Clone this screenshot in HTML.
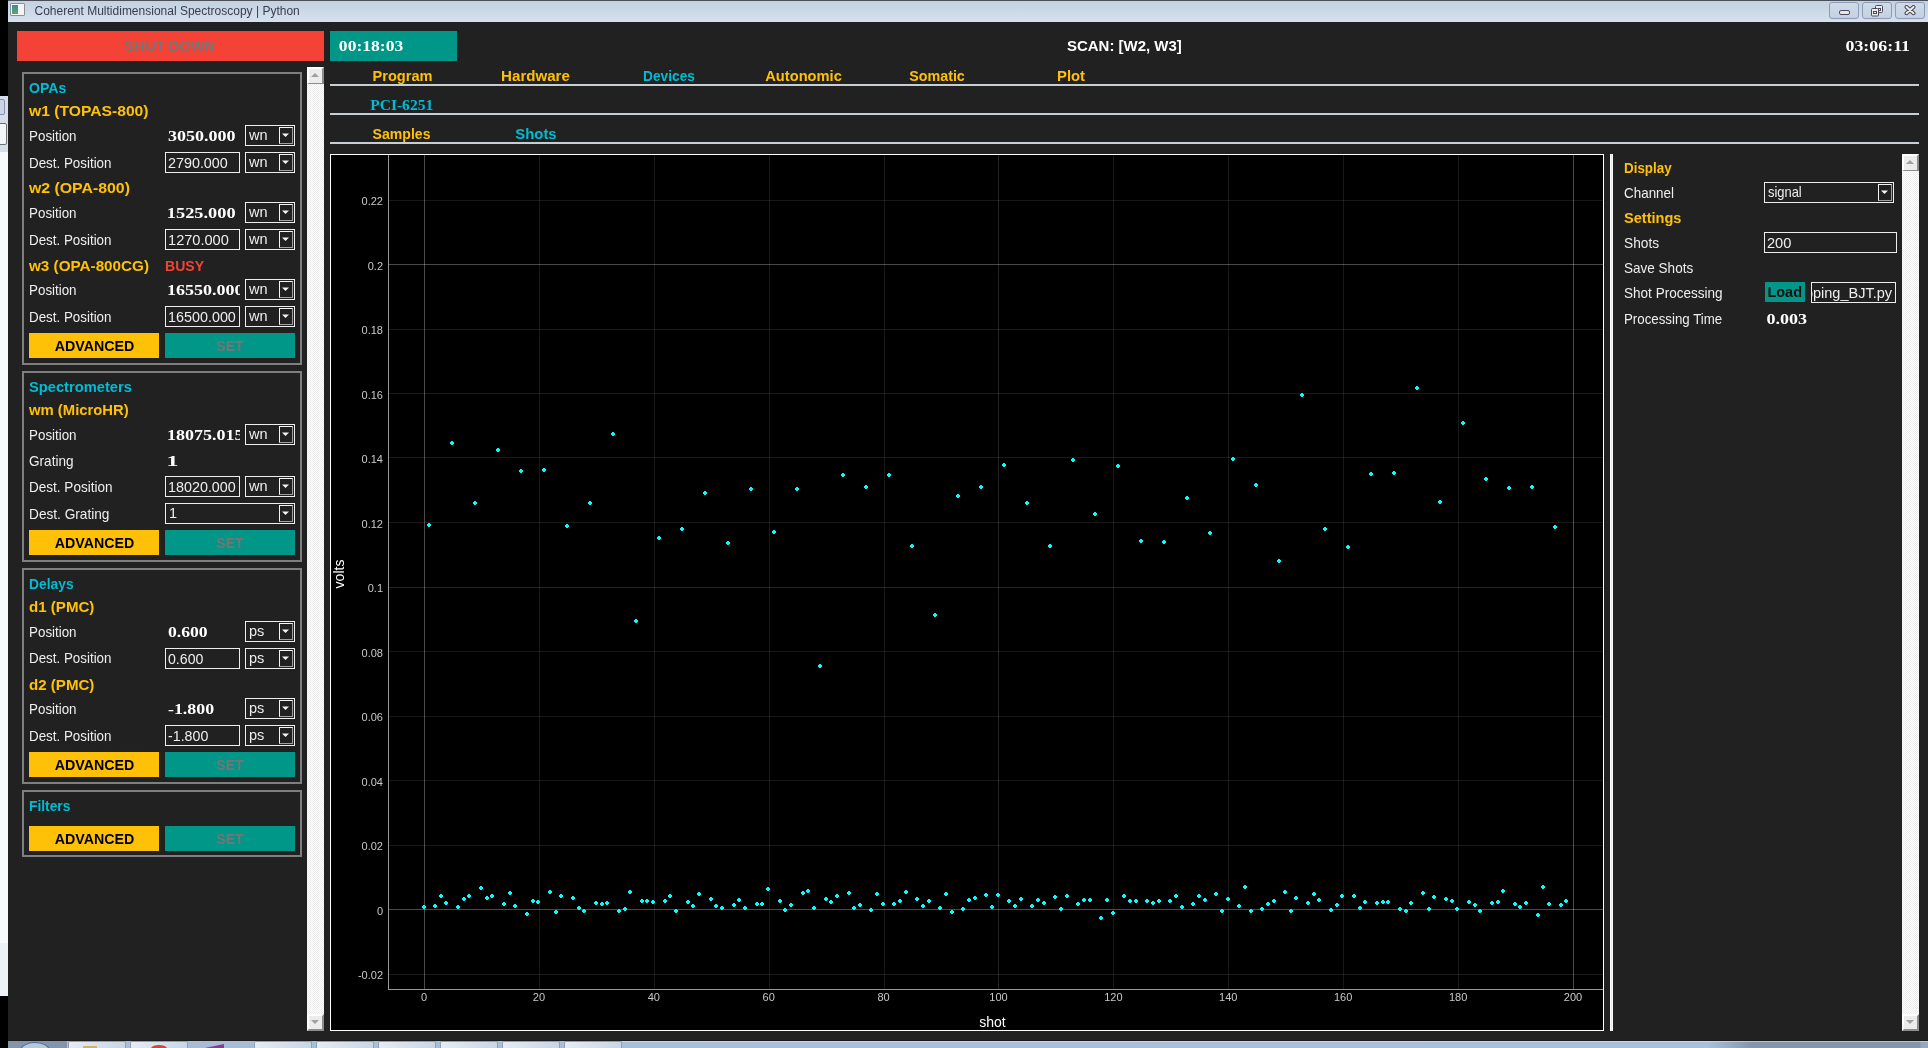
<!DOCTYPE html><html><head><meta charset="utf-8"><style>html,body{margin:0;padding:0;width:1928px;height:1048px;overflow:hidden;background:#212121;}#root{position:relative;width:1928px;height:1048px;overflow:hidden;background:#212121;}#root div{box-sizing:border-box;}</style></head><body><div id="root">
<div style="position:absolute;left:0px;top:0px;width:8px;height:1048px;background:#000"></div>
<div style="position:absolute;left:0px;top:96px;width:8px;height:56px;background:#d5dfeb"></div>
<div style="position:absolute;left:-4px;top:99px;width:9px;height:16px;border:1px solid #8890b0;border-radius:2px;background:#c9d5e3"></div>
<div style="position:absolute;left:-4px;top:123px;width:11px;height:22px;border:1px solid #707070;border-radius:2px;background:#f4f6f9"></div>
<div style="position:absolute;left:0px;top:152px;width:8px;height:791px;background:#f9fafb"></div>
<div style="position:absolute;left:0px;top:943px;width:8px;height:53px;background:#edf1f8"></div>
<div style="position:absolute;left:8px;top:0px;width:1920px;height:1px;background:#4a4f58"></div>
<div style="position:absolute;left:8px;top:1px;width:1920px;height:21px;background:linear-gradient(#c3d1e0,#d5e1ee)"></div>
<div style="position:absolute;left:10px;top:3px;width:15px;height:13px;background:#f4f4f4;border:1px solid #8a8f98;border-radius:1px"></div>
<div style="position:absolute;left:12px;top:5px;width:6px;height:9px;background:linear-gradient(#3c8aa0,#58a868)"></div>
<div style="position:absolute;left:34.5px;top:4.64px;font:normal 12px/12px 'Liberation Sans', sans-serif;color:#3a3d4e;white-space:pre;">Coherent Multidimensional Spectroscopy | Python</div>
<div style="position:absolute;left:1829px;top:2px;width:30px;height:17px;border:1px solid #8e9bb8;border-radius:3px;background:linear-gradient(#d0dbe8,#c4d1e2)"></div>
<div style="position:absolute;left:1862px;top:2px;width:30px;height:17px;border:1px solid #8e9bb8;border-radius:3px;background:linear-gradient(#d0dbe8,#c4d1e2)"></div>
<div style="position:absolute;left:1895px;top:2px;width:30px;height:17px;border:1px solid #8e9bb8;border-radius:3px;background:linear-gradient(#d0dbe8,#c4d1e2)"></div>
<div style="position:absolute;left:1839px;top:10px;width:11px;height:5px;background:#e8e8e8;border:1px solid #4a4a58;border-radius:2px"></div>
<svg style="position:absolute;left:1870px;top:4px" width="14" height="13"><rect x="5.5" y="1.5" width="7" height="7" rx="1" fill="#ececec" stroke="#4a4a58"/><rect x="8.5" y="4.5" width="2" height="2" fill="none" stroke="#4a4a58"/><rect x="1.5" y="4.5" width="7" height="7.5" rx="1" fill="#ececec" stroke="#4a4a58"/><rect x="3.5" y="7.5" width="3" height="2" fill="none" stroke="#4a4a58"/></svg>
<svg style="position:absolute;left:1903px;top:5px" width="14" height="11"><path d="M3.5 2 L10.5 8.2 M10.5 2 L3.5 8.2" stroke="#4a4a58" stroke-width="4" stroke-linecap="round"/><path d="M3.5 2 L10.5 8.2 M10.5 2 L3.5 8.2" stroke="#ececec" stroke-width="2" stroke-linecap="round"/></svg>
<div style="position:absolute;left:17px;top:31px;width:307px;height:30px;background:#f44336"></div>
<div id="t0" style="position:absolute;left:-29.5px;width:400px;text-align:center;top:39.15px;font:bold 14px/14px 'Liberation Sans', sans-serif;color:#757575;white-space:pre;transform:translateX(-10.478px) scaleX(1.0474);transform-origin:0 0;">SHUT DOWN</div>
<div style="position:absolute;left:330px;top:31px;width:127px;height:30px;background:#009688"></div>
<div id="t1" style="position:absolute;left:339.5px;top:39.98px;font:bold 14px/14px 'Liberation Serif', serif;color:#ffffff;white-space:pre;transform:translateX(-1.147px) scaleX(1.2553);transform-origin:0 0;">00:18:03</div>
<div id="t2" style="position:absolute;left:1067px;top:39.17px;font:bold 14.8px/14.8px 'Liberation Sans', sans-serif;color:#ffffff;white-space:pre;transform:translateX(0.000px) scaleX(1.0122);transform-origin:0 0;">SCAN: [W2, W3]</div>
<div id="t3" style="position:absolute;left:1509px;width:400px;text-align:right;top:39.98px;font:bold 14px/14px 'Liberation Serif', serif;color:#ffffff;white-space:pre;transform:translateX(-109.449px) scaleX(1.2762);transform-origin:0 0;">03:06:11</div>
<div id="t4" style="position:absolute;left:302.0px;width:200px;text-align:center;top:68.87px;font:bold 14.8px/14.8px 'Liberation Sans', sans-serif;color:#ffc107;white-space:pre;transform:translateX(1.858px) scaleX(0.9864);transform-origin:0 0;">Program</div>
<div id="t5" style="position:absolute;left:436.0px;width:200px;text-align:center;top:68.87px;font:bold 14.8px/14.8px 'Liberation Sans', sans-serif;color:#ffc107;white-space:pre;transform:translateX(-2.450px) scaleX(1.0194);transform-origin:0 0;">Hardware</div>
<div id="t6" style="position:absolute;left:569.5px;width:200px;text-align:center;top:68.87px;font:bold 14.8px/14.8px 'Liberation Sans', sans-serif;color:#00bcd4;white-space:pre;transform:translateX(6.292px) scaleX(0.9270);transform-origin:0 0;">Devices</div>
<div id="t7" style="position:absolute;left:703.0px;width:200px;text-align:center;top:68.87px;font:bold 14.8px/14.8px 'Liberation Sans', sans-serif;color:#ffc107;white-space:pre;transform:translateX(1.561px) scaleX(0.9898);transform-origin:0 0;">Autonomic</div>
<div id="t8" style="position:absolute;left:837.0px;width:200px;text-align:center;top:68.87px;font:bold 14.8px/14.8px 'Liberation Sans', sans-serif;color:#ffc107;white-space:pre;transform:translateX(3.288px) scaleX(0.9671);transform-origin:0 0;">Somatic</div>
<div id="t9" style="position:absolute;left:971.5px;width:200px;text-align:center;top:68.87px;font:bold 14.8px/14.8px 'Liberation Sans', sans-serif;color:#ffc107;white-space:pre;transform:translateX(-1.120px) scaleX(1.0014);transform-origin:0 0;">Plot</div>
<div style="position:absolute;left:330px;top:84px;width:1589px;height:2px;background:#c8ced4"></div>
<div id="t10" style="position:absolute;left:302.0px;width:200px;text-align:center;top:98.47px;font:bold 14.6px/14.6px 'Liberation Serif', serif;color:#00bcd4;white-space:pre;transform:translateX(-6.795px) scaleX(1.0648);transform-origin:0 0;">PCI-6251</div>
<div style="position:absolute;left:330px;top:113px;width:1589px;height:2px;background:#c8ced4"></div>
<div id="t11" style="position:absolute;left:301.5px;width:200px;text-align:center;top:126.87px;font:bold 14.8px/14.8px 'Liberation Sans', sans-serif;color:#ffc107;white-space:pre;transform:translateX(4.505px) scaleX(0.9503);transform-origin:0 0;">Samples</div>
<div id="t12" style="position:absolute;left:436.0px;width:200px;text-align:center;top:126.87px;font:bold 14.8px/14.8px 'Liberation Sans', sans-serif;color:#00bcd4;white-space:pre;transform:translateX(-0.466px) scaleX(1.0043);transform-origin:0 0;">Shots</div>
<div style="position:absolute;left:330px;top:142px;width:1589px;height:2px;background:#c8ced4"></div>
<div style="position:absolute;left:307px;top:67px;width:17px;height:964px;background-color:#f6f6f6;background-image:repeating-conic-gradient(#ffffff 0 25%,#ececec 0 50%);background-size:2px 2px"></div>
<div style="position:absolute;left:307px;top:67px;width:17px;height:17px;background:#ececec;border-top:2px solid #fff;border-left:2px solid #fff;border-right:2px solid #8c8c8c;border-bottom:1px solid #8c8c8c"></div>
<svg style="position:absolute;left:307px;top:67px" width="17" height="17"><path d="M4.0 10 L12.0 10 L8.0 6 Z" fill="#a0a0a0"/></svg>
<div style="position:absolute;left:307px;top:1014px;width:17px;height:17px;background:#ececec;border-top:2px solid #fff;border-left:2px solid #fff;border-right:2px solid #8c8c8c;border-bottom:2px solid #8c8c8c"></div>
<svg style="position:absolute;left:307px;top:1014px" width="17" height="17"><path d="M4.0 6 L12.0 6 L8.0 10 Z" fill="#a0a0a0"/></svg>
<div style="position:absolute;left:1902px;top:154px;width:17px;height:877px;background-color:#f6f6f6;background-image:repeating-conic-gradient(#ffffff 0 25%,#ececec 0 50%);background-size:2px 2px"></div>
<div style="position:absolute;left:1902px;top:154px;width:17px;height:17px;background:#ececec;border-top:2px solid #fff;border-left:2px solid #fff;border-right:2px solid #8c8c8c;border-bottom:1px solid #8c8c8c"></div>
<svg style="position:absolute;left:1902px;top:154px" width="17" height="17"><path d="M4.0 10 L12.0 10 L8.0 6 Z" fill="#a0a0a0"/></svg>
<div style="position:absolute;left:1902px;top:1014px;width:17px;height:17px;background:#ececec;border-top:2px solid #fff;border-left:2px solid #fff;border-right:2px solid #8c8c8c;border-bottom:2px solid #8c8c8c"></div>
<svg style="position:absolute;left:1902px;top:1014px" width="17" height="17"><path d="M4.0 6 L12.0 6 L8.0 10 Z" fill="#a0a0a0"/></svg>
<div style="position:absolute;left:22px;top:72px;width:280px;height:293px;border:2px solid #7f7f7f"></div>
<div id="t13" style="position:absolute;left:29px;top:81.47px;font:bold 14.8px/14.8px 'Liberation Sans', sans-serif;color:#00bcd4;white-space:pre;transform:translateX(0.010px) scaleX(0.9488);transform-origin:0 0;">OPAs</div>
<div id="t14" style="position:absolute;left:29px;top:104.47px;font:bold 14.8px/14.8px 'Liberation Sans', sans-serif;color:#ffc107;white-space:pre;transform:translateX(-0.026px) scaleX(1.0589);transform-origin:0 0;">w1 (TOPAS-800)</div>
<div id="t15" style="position:absolute;left:29px;top:128.73px;font:normal 14.5px/14.5px 'Liberation Sans', sans-serif;color:#eeeeee;white-space:pre;transform:translateX(0.050px) scaleX(0.9205);transform-origin:0 0;">Position</div>
<div id="t16" style="position:absolute;left:168px;top:128.22px;font:bold 15.5px/15.5px 'Liberation Serif', serif;color:#ffffff;white-space:pre;transform:translateX(-0.023px) scaleX(1.1622);transform-origin:0 0;">3050.000</div>
<div style="position:absolute;left:245px;top:125px;width:50px;height:21px;border:1px solid #eeeeee;background:#212121"></div>
<div style="position:absolute;left:279px;top:127px;width:14px;height:17px;border-top:1px solid #f4f4f4;border-left:1px solid #f4f4f4;border-right:1px solid #a0a0a0;border-bottom:1px solid #a0a0a0;background:#212121"></div>
<svg style="position:absolute;left:279px;top:125px" width="14" height="21"><path d="M3 8.5 L10 8.5 L6.5 12.0 Z" fill="#f4f4f4"/></svg>
<div style="position:absolute;left:249px;top:127.73px;font:normal 14.5px/14.5px 'Liberation Sans', sans-serif;color:#eeeeee;white-space:pre;">wn</div>
<div id="t17" style="position:absolute;left:29px;top:155.73px;font:normal 14.5px/14.5px 'Liberation Sans', sans-serif;color:#eeeeee;white-space:pre;transform:translateX(0.038px) scaleX(0.9216);transform-origin:0 0;">Dest. Position</div>
<div style="position:absolute;left:165px;top:152px;width:75px;height:21px;border:1px solid #eeeeee;background:#212121"></div>
<div id="t18" style="position:absolute;left:168px;top:156.03px;font:normal 14.5px/14.5px 'Liberation Sans', sans-serif;color:#eeeeee;white-space:pre;transform:translateX(-0.025px) scaleX(0.9893);transform-origin:0 0;">2790.000</div>
<div style="position:absolute;left:245px;top:152px;width:50px;height:21px;border:1px solid #eeeeee;background:#212121"></div>
<div style="position:absolute;left:279px;top:154px;width:14px;height:17px;border-top:1px solid #f4f4f4;border-left:1px solid #f4f4f4;border-right:1px solid #a0a0a0;border-bottom:1px solid #a0a0a0;background:#212121"></div>
<svg style="position:absolute;left:279px;top:152px" width="14" height="21"><path d="M3 8.5 L10 8.5 L6.5 12.0 Z" fill="#f4f4f4"/></svg>
<div style="position:absolute;left:249px;top:154.73px;font:normal 14.5px/14.5px 'Liberation Sans', sans-serif;color:#eeeeee;white-space:pre;">wn</div>
<div id="t19" style="position:absolute;left:29px;top:181.47px;font:bold 14.8px/14.8px 'Liberation Sans', sans-serif;color:#ffc107;white-space:pre;transform:translateX(-0.033px) scaleX(1.0709);transform-origin:0 0;">w2 (OPA-800)</div>
<div id="t20" style="position:absolute;left:29px;top:205.73px;font:normal 14.5px/14.5px 'Liberation Sans', sans-serif;color:#eeeeee;white-space:pre;transform:translateX(0.050px) scaleX(0.9205);transform-origin:0 0;">Position</div>
<div id="t21" style="position:absolute;left:168px;top:205.22px;font:bold 15.5px/15.5px 'Liberation Serif', serif;color:#ffffff;white-space:pre;transform:translateX(-1.213px) scaleX(1.1832);transform-origin:0 0;">1525.000</div>
<div style="position:absolute;left:245px;top:202px;width:50px;height:21px;border:1px solid #eeeeee;background:#212121"></div>
<div style="position:absolute;left:279px;top:204px;width:14px;height:17px;border-top:1px solid #f4f4f4;border-left:1px solid #f4f4f4;border-right:1px solid #a0a0a0;border-bottom:1px solid #a0a0a0;background:#212121"></div>
<svg style="position:absolute;left:279px;top:202px" width="14" height="21"><path d="M3 8.5 L10 8.5 L6.5 12.0 Z" fill="#f4f4f4"/></svg>
<div style="position:absolute;left:249px;top:204.73px;font:normal 14.5px/14.5px 'Liberation Sans', sans-serif;color:#eeeeee;white-space:pre;">wn</div>
<div id="t22" style="position:absolute;left:29px;top:232.73px;font:normal 14.5px/14.5px 'Liberation Sans', sans-serif;color:#eeeeee;white-space:pre;transform:translateX(0.038px) scaleX(0.9216);transform-origin:0 0;">Dest. Position</div>
<div style="position:absolute;left:165px;top:229px;width:75px;height:21px;border:1px solid #eeeeee;background:#212121"></div>
<div id="t23" style="position:absolute;left:168px;top:233.03px;font:normal 14.5px/14.5px 'Liberation Sans', sans-serif;color:#eeeeee;white-space:pre;transform:translateX(0.033px) scaleX(1.0049);transform-origin:0 0;">1270.000</div>
<div style="position:absolute;left:245px;top:229px;width:50px;height:21px;border:1px solid #eeeeee;background:#212121"></div>
<div style="position:absolute;left:279px;top:231px;width:14px;height:17px;border-top:1px solid #f4f4f4;border-left:1px solid #f4f4f4;border-right:1px solid #a0a0a0;border-bottom:1px solid #a0a0a0;background:#212121"></div>
<svg style="position:absolute;left:279px;top:229px" width="14" height="21"><path d="M3 8.5 L10 8.5 L6.5 12.0 Z" fill="#f4f4f4"/></svg>
<div style="position:absolute;left:249px;top:231.73px;font:normal 14.5px/14.5px 'Liberation Sans', sans-serif;color:#eeeeee;white-space:pre;">wn</div>
<div id="t24" style="position:absolute;left:29px;top:259.17px;font:bold 14.8px/14.8px 'Liberation Sans', sans-serif;color:#ffc107;white-space:pre;transform:translateX(-0.029px) scaleX(1.0308);transform-origin:0 0;">w3 (OPA-800CG)</div>
<div id="t25" style="position:absolute;left:165.7px;top:259.17px;font:bold 14.8px/14.8px 'Liberation Sans', sans-serif;color:#f44336;white-space:pre;transform:translateX(-0.955px) scaleX(0.9501);transform-origin:0 0;">BUSY</div>
<div id="t26" style="position:absolute;left:29px;top:282.73px;font:normal 14.5px/14.5px 'Liberation Sans', sans-serif;color:#eeeeee;white-space:pre;transform:translateX(0.050px) scaleX(0.9205);transform-origin:0 0;">Position</div>
<div style="position:absolute;left:160px;top:0;width:80px;height:1048px;overflow:hidden"><div style="position:absolute;left:7.0px;top:282.22px;font:bold 15.5px/15.5px 'Liberation Serif', serif;color:#ffffff;white-space:pre;transform:scaleX(1.1622);transform-origin:0 0;">16550.000</div></div>
<div style="position:absolute;left:245px;top:279px;width:50px;height:21px;border:1px solid #eeeeee;background:#212121"></div>
<div style="position:absolute;left:279px;top:281px;width:14px;height:17px;border-top:1px solid #f4f4f4;border-left:1px solid #f4f4f4;border-right:1px solid #a0a0a0;border-bottom:1px solid #a0a0a0;background:#212121"></div>
<svg style="position:absolute;left:279px;top:279px" width="14" height="21"><path d="M3 8.5 L10 8.5 L6.5 12.0 Z" fill="#f4f4f4"/></svg>
<div style="position:absolute;left:249px;top:281.73px;font:normal 14.5px/14.5px 'Liberation Sans', sans-serif;color:#eeeeee;white-space:pre;">wn</div>
<div id="t27" style="position:absolute;left:29px;top:309.73px;font:normal 14.5px/14.5px 'Liberation Sans', sans-serif;color:#eeeeee;white-space:pre;transform:translateX(0.038px) scaleX(0.9216);transform-origin:0 0;">Dest. Position</div>
<div style="position:absolute;left:165px;top:306px;width:75px;height:21px;border:1px solid #eeeeee;background:#212121"></div>
<div id="t28" style="position:absolute;left:168px;top:310.03px;font:normal 14.5px/14.5px 'Liberation Sans', sans-serif;color:#eeeeee;white-space:pre;transform:translateX(0.040px) scaleX(0.9891);transform-origin:0 0;">16500.000</div>
<div style="position:absolute;left:245px;top:306px;width:50px;height:21px;border:1px solid #eeeeee;background:#212121"></div>
<div style="position:absolute;left:279px;top:308px;width:14px;height:17px;border-top:1px solid #f4f4f4;border-left:1px solid #f4f4f4;border-right:1px solid #a0a0a0;border-bottom:1px solid #a0a0a0;background:#212121"></div>
<svg style="position:absolute;left:279px;top:306px" width="14" height="21"><path d="M3 8.5 L10 8.5 L6.5 12.0 Z" fill="#f4f4f4"/></svg>
<div style="position:absolute;left:249px;top:308.73px;font:normal 14.5px/14.5px 'Liberation Sans', sans-serif;color:#eeeeee;white-space:pre;">wn</div>
<div style="position:absolute;left:29px;top:333px;width:130px;height:25px;background:#ffc107"></div>
<div id="t29" style="position:absolute;left:29.0px;width:130px;text-align:center;top:339.45px;font:bold 14px/14px 'Liberation Sans', sans-serif;color:#000000;white-space:pre;transform:translateX(-0.521px) scaleX(1.0156);transform-origin:0 0;">ADVANCED</div>
<div style="position:absolute;left:165px;top:333px;width:130px;height:25px;background:#009688"></div>
<div id="t30" style="position:absolute;left:165.0px;width:130px;text-align:center;top:339.45px;font:bold 14px/14px 'Liberation Sans', sans-serif;color:#757575;white-space:pre;transform:translateX(-0.231px) scaleX(1.0032);transform-origin:0 0;">SET</div>
<div style="position:absolute;left:22px;top:371px;width:280px;height:191px;border:2px solid #7f7f7f"></div>
<div id="t31" style="position:absolute;left:29px;top:380.47px;font:bold 14.8px/14.8px 'Liberation Sans', sans-serif;color:#00bcd4;white-space:pre;transform:translateX(0.024px) scaleX(0.9923);transform-origin:0 0;">Spectrometers</div>
<div id="t32" style="position:absolute;left:29px;top:403.17px;font:bold 14.8px/14.8px 'Liberation Sans', sans-serif;color:#ffc107;white-space:pre;transform:translateX(-0.025px) scaleX(1.0031);transform-origin:0 0;">wm (MicroHR)</div>
<div id="t33" style="position:absolute;left:29px;top:427.73px;font:normal 14.5px/14.5px 'Liberation Sans', sans-serif;color:#eeeeee;white-space:pre;transform:translateX(0.050px) scaleX(0.9205);transform-origin:0 0;">Position</div>
<div style="position:absolute;left:160px;top:0;width:80px;height:1048px;overflow:hidden"><div style="position:absolute;left:7.0px;top:427.22px;font:bold 15.5px/15.5px 'Liberation Serif', serif;color:#ffffff;white-space:pre;transform:scaleX(1.1622);transform-origin:0 0;">18075.015</div></div>
<div style="position:absolute;left:245px;top:424px;width:50px;height:21px;border:1px solid #eeeeee;background:#212121"></div>
<div style="position:absolute;left:279px;top:426px;width:14px;height:17px;border-top:1px solid #f4f4f4;border-left:1px solid #f4f4f4;border-right:1px solid #a0a0a0;border-bottom:1px solid #a0a0a0;background:#212121"></div>
<svg style="position:absolute;left:279px;top:424px" width="14" height="21"><path d="M3 8.5 L10 8.5 L6.5 12.0 Z" fill="#f4f4f4"/></svg>
<div style="position:absolute;left:249px;top:426.73px;font:normal 14.5px/14.5px 'Liberation Sans', sans-serif;color:#eeeeee;white-space:pre;">wn</div>
<div id="t34" style="position:absolute;left:29px;top:453.73px;font:normal 14.5px/14.5px 'Liberation Sans', sans-serif;color:#eeeeee;white-space:pre;transform:translateX(0.008px) scaleX(0.9358);transform-origin:0 0;">Grating</div>
<div id="t35" style="position:absolute;left:168px;top:453.22px;font:bold 15.5px/15.5px 'Liberation Serif', serif;color:#ffffff;white-space:pre;transform:translateX(-1.618px) scaleX(1.5377);transform-origin:0 0;">1</div>
<div id="t36" style="position:absolute;left:29px;top:479.73px;font:normal 14.5px/14.5px 'Liberation Sans', sans-serif;color:#eeeeee;white-space:pre;transform:translateX(0.034px) scaleX(0.9327);transform-origin:0 0;">Dest. Position</div>
<div style="position:absolute;left:165px;top:476px;width:75px;height:21px;border:1px solid #eeeeee;background:#212121"></div>
<div id="t37" style="position:absolute;left:168px;top:480.03px;font:normal 14.5px/14.5px 'Liberation Sans', sans-serif;color:#eeeeee;white-space:pre;transform:translateX(0.047px) scaleX(0.9882);transform-origin:0 0;">18020.000</div>
<div style="position:absolute;left:245px;top:476px;width:50px;height:21px;border:1px solid #eeeeee;background:#212121"></div>
<div style="position:absolute;left:279px;top:478px;width:14px;height:17px;border-top:1px solid #f4f4f4;border-left:1px solid #f4f4f4;border-right:1px solid #a0a0a0;border-bottom:1px solid #a0a0a0;background:#212121"></div>
<svg style="position:absolute;left:279px;top:476px" width="14" height="21"><path d="M3 8.5 L10 8.5 L6.5 12.0 Z" fill="#f4f4f4"/></svg>
<div style="position:absolute;left:249px;top:478.73px;font:normal 14.5px/14.5px 'Liberation Sans', sans-serif;color:#eeeeee;white-space:pre;">wn</div>
<div id="t38" style="position:absolute;left:29px;top:506.73px;font:normal 14.5px/14.5px 'Liberation Sans', sans-serif;color:#eeeeee;white-space:pre;transform:translateX(0.023px) scaleX(0.9417);transform-origin:0 0;">Dest. Grating</div>
<div style="position:absolute;left:165px;top:503px;width:130px;height:21px;border:1px solid #eeeeee;background:#212121"></div>
<div style="position:absolute;left:279px;top:505px;width:14px;height:17px;border-top:1px solid #f4f4f4;border-left:1px solid #f4f4f4;border-right:1px solid #a0a0a0;border-bottom:1px solid #a0a0a0;background:#212121"></div>
<svg style="position:absolute;left:279px;top:503px" width="14" height="21"><path d="M3 8.5 L10 8.5 L6.5 12.0 Z" fill="#f4f4f4"/></svg>
<div style="position:absolute;left:169px;top:505.73px;font:normal 14.5px/14.5px 'Liberation Sans', sans-serif;color:#eeeeee;white-space:pre;">1</div>
<div style="position:absolute;left:29px;top:530px;width:130px;height:25px;background:#ffc107"></div>
<div id="t39" style="position:absolute;left:29.0px;width:130px;text-align:center;top:536.45px;font:bold 14px/14px 'Liberation Sans', sans-serif;color:#000000;white-space:pre;transform:translateX(-0.521px) scaleX(1.0156);transform-origin:0 0;">ADVANCED</div>
<div style="position:absolute;left:165px;top:530px;width:130px;height:25px;background:#009688"></div>
<div id="t40" style="position:absolute;left:165.0px;width:130px;text-align:center;top:536.45px;font:bold 14px/14px 'Liberation Sans', sans-serif;color:#757575;white-space:pre;transform:translateX(-0.231px) scaleX(1.0032);transform-origin:0 0;">SET</div>
<div style="position:absolute;left:22px;top:568px;width:280px;height:216px;border:2px solid #7f7f7f"></div>
<div id="t41" style="position:absolute;left:29px;top:577.17px;font:bold 14.8px/14.8px 'Liberation Sans', sans-serif;color:#00bcd4;white-space:pre;transform:translateX(0.008px) scaleX(0.9357);transform-origin:0 0;">Delays</div>
<div id="t42" style="position:absolute;left:29px;top:600.27px;font:bold 14.8px/14.8px 'Liberation Sans', sans-serif;color:#ffc107;white-space:pre;transform:translateX(0.014px) scaleX(1.0198);transform-origin:0 0;">d1 (PMC)</div>
<div id="t43" style="position:absolute;left:29px;top:624.73px;font:normal 14.5px/14.5px 'Liberation Sans', sans-serif;color:#eeeeee;white-space:pre;transform:translateX(0.050px) scaleX(0.9205);transform-origin:0 0;">Position</div>
<div id="t44" style="position:absolute;left:168px;top:624.22px;font:bold 15.5px/15.5px 'Liberation Serif', serif;color:#ffffff;white-space:pre;transform:translateX(-0.027px) scaleX(1.1379);transform-origin:0 0;">0.600</div>
<div style="position:absolute;left:245px;top:621px;width:50px;height:21px;border:1px solid #eeeeee;background:#212121"></div>
<div style="position:absolute;left:279px;top:623px;width:14px;height:17px;border-top:1px solid #f4f4f4;border-left:1px solid #f4f4f4;border-right:1px solid #a0a0a0;border-bottom:1px solid #a0a0a0;background:#212121"></div>
<svg style="position:absolute;left:279px;top:621px" width="14" height="21"><path d="M3 8.5 L10 8.5 L6.5 12.0 Z" fill="#f4f4f4"/></svg>
<div style="position:absolute;left:249px;top:623.73px;font:normal 14.5px/14.5px 'Liberation Sans', sans-serif;color:#eeeeee;white-space:pre;">ps</div>
<div id="t45" style="position:absolute;left:29px;top:651.23px;font:normal 14.5px/14.5px 'Liberation Sans', sans-serif;color:#eeeeee;white-space:pre;transform:translateX(0.038px) scaleX(0.9216);transform-origin:0 0;">Dest. Position</div>
<div style="position:absolute;left:165px;top:648px;width:75px;height:21px;border:1px solid #eeeeee;background:#212121"></div>
<div id="t46" style="position:absolute;left:168px;top:652.03px;font:normal 14.5px/14.5px 'Liberation Sans', sans-serif;color:#eeeeee;white-space:pre;transform:translateX(-0.014px) scaleX(0.9755);transform-origin:0 0;">0.600</div>
<div style="position:absolute;left:245px;top:648px;width:50px;height:21px;border:1px solid #eeeeee;background:#212121"></div>
<div style="position:absolute;left:279px;top:650px;width:14px;height:17px;border-top:1px solid #f4f4f4;border-left:1px solid #f4f4f4;border-right:1px solid #a0a0a0;border-bottom:1px solid #a0a0a0;background:#212121"></div>
<svg style="position:absolute;left:279px;top:648px" width="14" height="21"><path d="M3 8.5 L10 8.5 L6.5 12.0 Z" fill="#f4f4f4"/></svg>
<div style="position:absolute;left:249px;top:650.73px;font:normal 14.5px/14.5px 'Liberation Sans', sans-serif;color:#eeeeee;white-space:pre;">ps</div>
<div id="t47" style="position:absolute;left:29px;top:677.67px;font:bold 14.8px/14.8px 'Liberation Sans', sans-serif;color:#ffc107;white-space:pre;transform:translateX(0.014px) scaleX(1.0198);transform-origin:0 0;">d2 (PMC)</div>
<div id="t48" style="position:absolute;left:29px;top:701.73px;font:normal 14.5px/14.5px 'Liberation Sans', sans-serif;color:#eeeeee;white-space:pre;transform:translateX(0.050px) scaleX(0.9205);transform-origin:0 0;">Position</div>
<div id="t49" style="position:absolute;left:168px;top:701.22px;font:bold 15.5px/15.5px 'Liberation Serif', serif;color:#ffffff;white-space:pre;transform:translateX(-0.032px) scaleX(1.1531);transform-origin:0 0;">-1.800</div>
<div style="position:absolute;left:245px;top:698px;width:50px;height:21px;border:1px solid #eeeeee;background:#212121"></div>
<div style="position:absolute;left:279px;top:700px;width:14px;height:17px;border-top:1px solid #f4f4f4;border-left:1px solid #f4f4f4;border-right:1px solid #a0a0a0;border-bottom:1px solid #a0a0a0;background:#212121"></div>
<svg style="position:absolute;left:279px;top:698px" width="14" height="21"><path d="M3 8.5 L10 8.5 L6.5 12.0 Z" fill="#f4f4f4"/></svg>
<div style="position:absolute;left:249px;top:700.73px;font:normal 14.5px/14.5px 'Liberation Sans', sans-serif;color:#eeeeee;white-space:pre;">ps</div>
<div id="t50" style="position:absolute;left:29px;top:728.73px;font:normal 14.5px/14.5px 'Liberation Sans', sans-serif;color:#eeeeee;white-space:pre;transform:translateX(0.038px) scaleX(0.9216);transform-origin:0 0;">Dest. Position</div>
<div style="position:absolute;left:165px;top:725px;width:75px;height:21px;border:1px solid #eeeeee;background:#212121"></div>
<div id="t51" style="position:absolute;left:168px;top:729.03px;font:normal 14.5px/14.5px 'Liberation Sans', sans-serif;color:#eeeeee;white-space:pre;transform:translateX(0.042px) scaleX(0.9792);transform-origin:0 0;">-1.800</div>
<div style="position:absolute;left:245px;top:725px;width:50px;height:21px;border:1px solid #eeeeee;background:#212121"></div>
<div style="position:absolute;left:279px;top:727px;width:14px;height:17px;border-top:1px solid #f4f4f4;border-left:1px solid #f4f4f4;border-right:1px solid #a0a0a0;border-bottom:1px solid #a0a0a0;background:#212121"></div>
<svg style="position:absolute;left:279px;top:725px" width="14" height="21"><path d="M3 8.5 L10 8.5 L6.5 12.0 Z" fill="#f4f4f4"/></svg>
<div style="position:absolute;left:249px;top:727.73px;font:normal 14.5px/14.5px 'Liberation Sans', sans-serif;color:#eeeeee;white-space:pre;">ps</div>
<div style="position:absolute;left:29px;top:752px;width:130px;height:25px;background:#ffc107"></div>
<div id="t52" style="position:absolute;left:29.0px;width:130px;text-align:center;top:758.45px;font:bold 14px/14px 'Liberation Sans', sans-serif;color:#000000;white-space:pre;transform:translateX(-0.521px) scaleX(1.0156);transform-origin:0 0;">ADVANCED</div>
<div style="position:absolute;left:165px;top:752px;width:130px;height:25px;background:#009688"></div>
<div id="t53" style="position:absolute;left:165.0px;width:130px;text-align:center;top:758.45px;font:bold 14px/14px 'Liberation Sans', sans-serif;color:#757575;white-space:pre;transform:translateX(-0.231px) scaleX(1.0032);transform-origin:0 0;">SET</div>
<div style="position:absolute;left:22px;top:790px;width:280px;height:67px;border:2px solid #7f7f7f"></div>
<div id="t54" style="position:absolute;left:29px;top:799.27px;font:bold 14.8px/14.8px 'Liberation Sans', sans-serif;color:#00bcd4;white-space:pre;transform:translateX(0.009px) scaleX(0.9312);transform-origin:0 0;">Filters</div>
<div style="position:absolute;left:29px;top:826px;width:130px;height:25px;background:#ffc107"></div>
<div id="t55" style="position:absolute;left:29.0px;width:130px;text-align:center;top:832.45px;font:bold 14px/14px 'Liberation Sans', sans-serif;color:#000000;white-space:pre;transform:translateX(-0.521px) scaleX(1.0156);transform-origin:0 0;">ADVANCED</div>
<div style="position:absolute;left:165px;top:826px;width:130px;height:25px;background:#009688"></div>
<div id="t56" style="position:absolute;left:165.0px;width:130px;text-align:center;top:832.45px;font:bold 14px/14px 'Liberation Sans', sans-serif;color:#757575;white-space:pre;transform:translateX(-0.231px) scaleX(1.0032);transform-origin:0 0;">SET</div>
<div style="position:absolute;left:330px;top:154px;width:1274px;height:877px;background:#000;border:1px solid #ffffff"></div>
<svg style="position:absolute;left:330px;top:154px" width="1274" height="877" shape-rendering="crispEdges"><path d="M59 820.5H1273" stroke="#181818" stroke-width="1"/><path d="M59 755.5H1273" stroke="#4a4a4a" stroke-width="1"/><path d="M59 691.5H1273" stroke="#181818" stroke-width="1"/><path d="M59 626.5H1273" stroke="#181818" stroke-width="1"/><path d="M59 562.5H1273" stroke="#181818" stroke-width="1"/><path d="M59 497.5H1273" stroke="#181818" stroke-width="1"/><path d="M59 433.5H1273" stroke="#232323" stroke-width="1"/><path d="M59 368.5H1273" stroke="#181818" stroke-width="1"/><path d="M59 303.5H1273" stroke="#181818" stroke-width="1"/><path d="M59 239.5H1273" stroke="#181818" stroke-width="1"/><path d="M59 175.5H1273" stroke="#181818" stroke-width="1"/><path d="M59 110.5H1273" stroke="#4a4a4a" stroke-width="1"/><path d="M59 46.5H1273" stroke="#181818" stroke-width="1"/><path d="M94.5 1V835" stroke="#4a4a4a" stroke-width="1" style="mix-blend-mode:screen"/><path d="M209.5 1V835" stroke="#181818" stroke-width="1" style="mix-blend-mode:screen"/><path d="M324.5 1V835" stroke="#181818" stroke-width="1" style="mix-blend-mode:screen"/><path d="M439.5 1V835" stroke="#181818" stroke-width="1" style="mix-blend-mode:screen"/><path d="M554.5 1V835" stroke="#181818" stroke-width="1" style="mix-blend-mode:screen"/><path d="M668.5 1V835" stroke="#232323" stroke-width="1" style="mix-blend-mode:screen"/><path d="M783.5 1V835" stroke="#181818" stroke-width="1" style="mix-blend-mode:screen"/><path d="M898.5 1V835" stroke="#181818" stroke-width="1" style="mix-blend-mode:screen"/><path d="M1013.5 1V835" stroke="#181818" stroke-width="1" style="mix-blend-mode:screen"/><path d="M1128.5 1V835" stroke="#181818" stroke-width="1" style="mix-blend-mode:screen"/><path d="M1243.5 1V835" stroke="#4a4a4a" stroke-width="1" style="mix-blend-mode:screen"/><path d="M58.5 1V835.5H1273" stroke="#999999" stroke-width="1" fill="none"/></svg>
<div style="position:absolute;left:323px;width:60px;text-align:right;top:970.19px;font:normal 11px/11px 'Liberation Sans', sans-serif;color:#c8c8c8;white-space:pre;">-0.02</div>
<div style="position:absolute;left:323px;width:60px;text-align:right;top:905.69px;font:normal 11px/11px 'Liberation Sans', sans-serif;color:#c8c8c8;white-space:pre;">0</div>
<div style="position:absolute;left:323px;width:60px;text-align:right;top:841.19px;font:normal 11px/11px 'Liberation Sans', sans-serif;color:#c8c8c8;white-space:pre;">0.02</div>
<div style="position:absolute;left:323px;width:60px;text-align:right;top:776.69px;font:normal 11px/11px 'Liberation Sans', sans-serif;color:#c8c8c8;white-space:pre;">0.04</div>
<div style="position:absolute;left:323px;width:60px;text-align:right;top:712.19px;font:normal 11px/11px 'Liberation Sans', sans-serif;color:#c8c8c8;white-space:pre;">0.06</div>
<div style="position:absolute;left:323px;width:60px;text-align:right;top:647.69px;font:normal 11px/11px 'Liberation Sans', sans-serif;color:#c8c8c8;white-space:pre;">0.08</div>
<div style="position:absolute;left:323px;width:60px;text-align:right;top:583.19px;font:normal 11px/11px 'Liberation Sans', sans-serif;color:#c8c8c8;white-space:pre;">0.1</div>
<div style="position:absolute;left:323px;width:60px;text-align:right;top:518.69px;font:normal 11px/11px 'Liberation Sans', sans-serif;color:#c8c8c8;white-space:pre;">0.12</div>
<div style="position:absolute;left:323px;width:60px;text-align:right;top:454.19px;font:normal 11px/11px 'Liberation Sans', sans-serif;color:#c8c8c8;white-space:pre;">0.14</div>
<div style="position:absolute;left:323px;width:60px;text-align:right;top:389.69px;font:normal 11px/11px 'Liberation Sans', sans-serif;color:#c8c8c8;white-space:pre;">0.16</div>
<div style="position:absolute;left:323px;width:60px;text-align:right;top:325.19px;font:normal 11px/11px 'Liberation Sans', sans-serif;color:#c8c8c8;white-space:pre;">0.18</div>
<div style="position:absolute;left:323px;width:60px;text-align:right;top:260.69px;font:normal 11px/11px 'Liberation Sans', sans-serif;color:#c8c8c8;white-space:pre;">0.2</div>
<div style="position:absolute;left:323px;width:60px;text-align:right;top:196.19px;font:normal 11px/11px 'Liberation Sans', sans-serif;color:#c8c8c8;white-space:pre;">0.22</div>
<div style="position:absolute;left:394.0px;width:60px;text-align:center;top:991.69px;font:normal 11px/11px 'Liberation Sans', sans-serif;color:#c8c8c8;white-space:pre;">0</div>
<div style="position:absolute;left:508.9px;width:60px;text-align:center;top:991.69px;font:normal 11px/11px 'Liberation Sans', sans-serif;color:#c8c8c8;white-space:pre;">20</div>
<div style="position:absolute;left:623.8px;width:60px;text-align:center;top:991.69px;font:normal 11px/11px 'Liberation Sans', sans-serif;color:#c8c8c8;white-space:pre;">40</div>
<div style="position:absolute;left:738.7px;width:60px;text-align:center;top:991.69px;font:normal 11px/11px 'Liberation Sans', sans-serif;color:#c8c8c8;white-space:pre;">60</div>
<div style="position:absolute;left:853.6px;width:60px;text-align:center;top:991.69px;font:normal 11px/11px 'Liberation Sans', sans-serif;color:#c8c8c8;white-space:pre;">80</div>
<div style="position:absolute;left:968.5px;width:60px;text-align:center;top:991.69px;font:normal 11px/11px 'Liberation Sans', sans-serif;color:#c8c8c8;white-space:pre;">100</div>
<div style="position:absolute;left:1083.4px;width:60px;text-align:center;top:991.69px;font:normal 11px/11px 'Liberation Sans', sans-serif;color:#c8c8c8;white-space:pre;">120</div>
<div style="position:absolute;left:1198.3000000000002px;width:60px;text-align:center;top:991.69px;font:normal 11px/11px 'Liberation Sans', sans-serif;color:#c8c8c8;white-space:pre;">140</div>
<div style="position:absolute;left:1313.2px;width:60px;text-align:center;top:991.69px;font:normal 11px/11px 'Liberation Sans', sans-serif;color:#c8c8c8;white-space:pre;">160</div>
<div style="position:absolute;left:1428.1px;width:60px;text-align:center;top:991.69px;font:normal 11px/11px 'Liberation Sans', sans-serif;color:#c8c8c8;white-space:pre;">180</div>
<div style="position:absolute;left:1543.0px;width:60px;text-align:center;top:991.69px;font:normal 11px/11px 'Liberation Sans', sans-serif;color:#c8c8c8;white-space:pre;">200</div>
<div style="position:absolute;left:942.5px;width:100px;text-align:center;top:1014.95px;font:normal 14px/14px 'Liberation Sans', sans-serif;color:#ffffff;white-space:pre;">shot</div>
<div style="position:absolute;left:339px;top:574px;width:0;height:0"><div style="position:absolute;left:-50px;top:-8px;width:100px;height:16px;transform:rotate(-90deg);text-align:center;font:14px/16px 'Liberation Sans', sans-serif;color:#fff">volts</div></div>
<svg style="position:absolute;left:330px;top:154px" width="1274" height="877" shape-rendering="crispEdges"><path d="M93 751h2v1h1v2h-1v1h-2v-1h-1v-2h1zM98 369h2v1h1v2h-1v1h-2v-1h-1v-2h1zM104 750h2v1h1v2h-1v1h-2v-1h-1v-2h1zM110 740h2v1h1v2h-1v1h-2v-1h-1v-2h1zM115 747h2v1h1v2h-1v1h-2v-1h-1v-2h1zM121 287h2v1h1v2h-1v1h-2v-1h-1v-2h1zM127 751h2v1h1v2h-1v1h-2v-1h-1v-2h1zM133 743h2v1h1v2h-1v1h-2v-1h-1v-2h1zM138 740h2v1h1v2h-1v1h-2v-1h-1v-2h1zM144 347h2v1h1v2h-1v1h-2v-1h-1v-2h1zM150 732h2v1h1v2h-1v1h-2v-1h-1v-2h1zM156 742h2v1h1v2h-1v1h-2v-1h-1v-2h1zM161 740h2v1h1v2h-1v1h-2v-1h-1v-2h1zM167 294h2v1h1v2h-1v1h-2v-1h-1v-2h1zM173 748h2v1h1v2h-1v1h-2v-1h-1v-2h1zM179 737h2v1h1v2h-1v1h-2v-1h-1v-2h1zM184 750h2v1h1v2h-1v1h-2v-1h-1v-2h1zM190 315h2v1h1v2h-1v1h-2v-1h-1v-2h1zM196 758h2v1h1v2h-1v1h-2v-1h-1v-2h1zM202 745h2v1h1v2h-1v1h-2v-1h-1v-2h1zM207 746h2v1h1v2h-1v1h-2v-1h-1v-2h1zM213 314h2v1h1v2h-1v1h-2v-1h-1v-2h1zM219 736h2v1h1v2h-1v1h-2v-1h-1v-2h1zM225 756h2v1h1v2h-1v1h-2v-1h-1v-2h1zM230 740h2v1h1v2h-1v1h-2v-1h-1v-2h1zM236 370h2v1h1v2h-1v1h-2v-1h-1v-2h1zM242 742h2v1h1v2h-1v1h-2v-1h-1v-2h1zM248 752h2v1h1v2h-1v1h-2v-1h-1v-2h1zM253 755h2v1h1v2h-1v1h-2v-1h-1v-2h1zM259 347h2v1h1v2h-1v1h-2v-1h-1v-2h1zM265 747h2v1h1v2h-1v1h-2v-1h-1v-2h1zM271 748h2v1h1v2h-1v1h-2v-1h-1v-2h1zM276 747h2v1h1v2h-1v1h-2v-1h-1v-2h1zM282 278h2v1h1v2h-1v1h-2v-1h-1v-2h1zM288 755h2v1h1v2h-1v1h-2v-1h-1v-2h1zM294 753h2v1h1v2h-1v1h-2v-1h-1v-2h1zM299 736h2v1h1v2h-1v1h-2v-1h-1v-2h1zM305 465h2v1h1v2h-1v1h-2v-1h-1v-2h1zM311 745h2v1h1v2h-1v1h-2v-1h-1v-2h1zM316 745h2v1h1v2h-1v1h-2v-1h-1v-2h1zM322 746h2v1h1v2h-1v1h-2v-1h-1v-2h1zM328 382h2v1h1v2h-1v1h-2v-1h-1v-2h1zM334 745h2v1h1v2h-1v1h-2v-1h-1v-2h1zM339 740h2v1h1v2h-1v1h-2v-1h-1v-2h1zM345 755h2v1h1v2h-1v1h-2v-1h-1v-2h1zM351 373h2v1h1v2h-1v1h-2v-1h-1v-2h1zM357 746h2v1h1v2h-1v1h-2v-1h-1v-2h1zM362 750h2v1h1v2h-1v1h-2v-1h-1v-2h1zM368 738h2v1h1v2h-1v1h-2v-1h-1v-2h1zM374 337h2v1h1v2h-1v1h-2v-1h-1v-2h1zM380 743h2v1h1v2h-1v1h-2v-1h-1v-2h1zM385 750h2v1h1v2h-1v1h-2v-1h-1v-2h1zM391 752h2v1h1v2h-1v1h-2v-1h-1v-2h1zM397 387h2v1h1v2h-1v1h-2v-1h-1v-2h1zM403 749h2v1h1v2h-1v1h-2v-1h-1v-2h1zM408 744h2v1h1v2h-1v1h-2v-1h-1v-2h1zM414 752h2v1h1v2h-1v1h-2v-1h-1v-2h1zM420 333h2v1h1v2h-1v1h-2v-1h-1v-2h1zM426 748h2v1h1v2h-1v1h-2v-1h-1v-2h1zM431 748h2v1h1v2h-1v1h-2v-1h-1v-2h1zM437 733h2v1h1v2h-1v1h-2v-1h-1v-2h1zM443 376h2v1h1v2h-1v1h-2v-1h-1v-2h1zM449 745h2v1h1v2h-1v1h-2v-1h-1v-2h1zM454 754h2v1h1v2h-1v1h-2v-1h-1v-2h1zM460 749h2v1h1v2h-1v1h-2v-1h-1v-2h1zM466 333h2v1h1v2h-1v1h-2v-1h-1v-2h1zM472 737h2v1h1v2h-1v1h-2v-1h-1v-2h1zM477 735h2v1h1v2h-1v1h-2v-1h-1v-2h1zM483 752h2v1h1v2h-1v1h-2v-1h-1v-2h1zM489 510h2v1h1v2h-1v1h-2v-1h-1v-2h1zM495 743h2v1h1v2h-1v1h-2v-1h-1v-2h1zM500 746h2v1h1v2h-1v1h-2v-1h-1v-2h1zM506 740h2v1h1v2h-1v1h-2v-1h-1v-2h1zM512 319h2v1h1v2h-1v1h-2v-1h-1v-2h1zM518 737h2v1h1v2h-1v1h-2v-1h-1v-2h1zM523 752h2v1h1v2h-1v1h-2v-1h-1v-2h1zM529 749h2v1h1v2h-1v1h-2v-1h-1v-2h1zM535 331h2v1h1v2h-1v1h-2v-1h-1v-2h1zM540 754h2v1h1v2h-1v1h-2v-1h-1v-2h1zM546 738h2v1h1v2h-1v1h-2v-1h-1v-2h1zM552 748h2v1h1v2h-1v1h-2v-1h-1v-2h1zM558 319h2v1h1v2h-1v1h-2v-1h-1v-2h1zM563 748h2v1h1v2h-1v1h-2v-1h-1v-2h1zM569 745h2v1h1v2h-1v1h-2v-1h-1v-2h1zM575 736h2v1h1v2h-1v1h-2v-1h-1v-2h1zM581 390h2v1h1v2h-1v1h-2v-1h-1v-2h1zM586 743h2v1h1v2h-1v1h-2v-1h-1v-2h1zM592 750h2v1h1v2h-1v1h-2v-1h-1v-2h1zM598 745h2v1h1v2h-1v1h-2v-1h-1v-2h1zM604 459h2v1h1v2h-1v1h-2v-1h-1v-2h1zM609 752h2v1h1v2h-1v1h-2v-1h-1v-2h1zM615 738h2v1h1v2h-1v1h-2v-1h-1v-2h1zM621 756h2v1h1v2h-1v1h-2v-1h-1v-2h1zM627 340h2v1h1v2h-1v1h-2v-1h-1v-2h1zM632 753h2v1h1v2h-1v1h-2v-1h-1v-2h1zM638 744h2v1h1v2h-1v1h-2v-1h-1v-2h1zM644 742h2v1h1v2h-1v1h-2v-1h-1v-2h1zM650 331h2v1h1v2h-1v1h-2v-1h-1v-2h1zM655 739h2v1h1v2h-1v1h-2v-1h-1v-2h1zM661 751h2v1h1v2h-1v1h-2v-1h-1v-2h1zM667 739h2v1h1v2h-1v1h-2v-1h-1v-2h1zM673 309h2v1h1v2h-1v1h-2v-1h-1v-2h1zM678 745h2v1h1v2h-1v1h-2v-1h-1v-2h1zM684 750h2v1h1v2h-1v1h-2v-1h-1v-2h1zM690 743h2v1h1v2h-1v1h-2v-1h-1v-2h1zM696 347h2v1h1v2h-1v1h-2v-1h-1v-2h1zM701 750h2v1h1v2h-1v1h-2v-1h-1v-2h1zM707 744h2v1h1v2h-1v1h-2v-1h-1v-2h1zM713 747h2v1h1v2h-1v1h-2v-1h-1v-2h1zM719 390h2v1h1v2h-1v1h-2v-1h-1v-2h1zM724 741h2v1h1v2h-1v1h-2v-1h-1v-2h1zM730 753h2v1h1v2h-1v1h-2v-1h-1v-2h1zM736 740h2v1h1v2h-1v1h-2v-1h-1v-2h1zM742 304h2v1h1v2h-1v1h-2v-1h-1v-2h1zM747 748h2v1h1v2h-1v1h-2v-1h-1v-2h1zM753 744h2v1h1v2h-1v1h-2v-1h-1v-2h1zM759 744h2v1h1v2h-1v1h-2v-1h-1v-2h1zM764 358h2v1h1v2h-1v1h-2v-1h-1v-2h1zM770 762h2v1h1v2h-1v1h-2v-1h-1v-2h1zM776 744h2v1h1v2h-1v1h-2v-1h-1v-2h1zM782 757h2v1h1v2h-1v1h-2v-1h-1v-2h1zM787 310h2v1h1v2h-1v1h-2v-1h-1v-2h1zM793 740h2v1h1v2h-1v1h-2v-1h-1v-2h1zM799 745h2v1h1v2h-1v1h-2v-1h-1v-2h1zM805 745h2v1h1v2h-1v1h-2v-1h-1v-2h1zM810 385h2v1h1v2h-1v1h-2v-1h-1v-2h1zM816 745h2v1h1v2h-1v1h-2v-1h-1v-2h1zM822 747h2v1h1v2h-1v1h-2v-1h-1v-2h1zM828 745h2v1h1v2h-1v1h-2v-1h-1v-2h1zM833 386h2v1h1v2h-1v1h-2v-1h-1v-2h1zM839 745h2v1h1v2h-1v1h-2v-1h-1v-2h1zM845 740h2v1h1v2h-1v1h-2v-1h-1v-2h1zM851 751h2v1h1v2h-1v1h-2v-1h-1v-2h1zM856 342h2v1h1v2h-1v1h-2v-1h-1v-2h1zM862 748h2v1h1v2h-1v1h-2v-1h-1v-2h1zM868 740h2v1h1v2h-1v1h-2v-1h-1v-2h1zM874 744h2v1h1v2h-1v1h-2v-1h-1v-2h1zM879 377h2v1h1v2h-1v1h-2v-1h-1v-2h1zM885 738h2v1h1v2h-1v1h-2v-1h-1v-2h1zM891 755h2v1h1v2h-1v1h-2v-1h-1v-2h1zM897 743h2v1h1v2h-1v1h-2v-1h-1v-2h1zM902 303h2v1h1v2h-1v1h-2v-1h-1v-2h1zM908 750h2v1h1v2h-1v1h-2v-1h-1v-2h1zM914 731h2v1h1v2h-1v1h-2v-1h-1v-2h1zM920 755h2v1h1v2h-1v1h-2v-1h-1v-2h1zM925 329h2v1h1v2h-1v1h-2v-1h-1v-2h1zM931 753h2v1h1v2h-1v1h-2v-1h-1v-2h1zM937 748h2v1h1v2h-1v1h-2v-1h-1v-2h1zM943 745h2v1h1v2h-1v1h-2v-1h-1v-2h1zM948 405h2v1h1v2h-1v1h-2v-1h-1v-2h1zM954 736h2v1h1v2h-1v1h-2v-1h-1v-2h1zM960 755h2v1h1v2h-1v1h-2v-1h-1v-2h1zM965 742h2v1h1v2h-1v1h-2v-1h-1v-2h1zM971 239h2v1h1v2h-1v1h-2v-1h-1v-2h1zM977 747h2v1h1v2h-1v1h-2v-1h-1v-2h1zM983 738h2v1h1v2h-1v1h-2v-1h-1v-2h1zM988 744h2v1h1v2h-1v1h-2v-1h-1v-2h1zM994 373h2v1h1v2h-1v1h-2v-1h-1v-2h1zM1000 754h2v1h1v2h-1v1h-2v-1h-1v-2h1zM1006 749h2v1h1v2h-1v1h-2v-1h-1v-2h1zM1011 740h2v1h1v2h-1v1h-2v-1h-1v-2h1zM1017 391h2v1h1v2h-1v1h-2v-1h-1v-2h1zM1023 740h2v1h1v2h-1v1h-2v-1h-1v-2h1zM1029 752h2v1h1v2h-1v1h-2v-1h-1v-2h1zM1034 746h2v1h1v2h-1v1h-2v-1h-1v-2h1zM1040 318h2v1h1v2h-1v1h-2v-1h-1v-2h1zM1046 747h2v1h1v2h-1v1h-2v-1h-1v-2h1zM1052 746h2v1h1v2h-1v1h-2v-1h-1v-2h1zM1057 746h2v1h1v2h-1v1h-2v-1h-1v-2h1zM1063 317h2v1h1v2h-1v1h-2v-1h-1v-2h1zM1069 753h2v1h1v2h-1v1h-2v-1h-1v-2h1zM1075 755h2v1h1v2h-1v1h-2v-1h-1v-2h1zM1080 747h2v1h1v2h-1v1h-2v-1h-1v-2h1zM1086 232h2v1h1v2h-1v1h-2v-1h-1v-2h1zM1092 737h2v1h1v2h-1v1h-2v-1h-1v-2h1zM1098 753h2v1h1v2h-1v1h-2v-1h-1v-2h1zM1103 741h2v1h1v2h-1v1h-2v-1h-1v-2h1zM1109 346h2v1h1v2h-1v1h-2v-1h-1v-2h1zM1115 743h2v1h1v2h-1v1h-2v-1h-1v-2h1zM1121 745h2v1h1v2h-1v1h-2v-1h-1v-2h1zM1126 753h2v1h1v2h-1v1h-2v-1h-1v-2h1zM1132 267h2v1h1v2h-1v1h-2v-1h-1v-2h1zM1138 746h2v1h1v2h-1v1h-2v-1h-1v-2h1zM1144 749h2v1h1v2h-1v1h-2v-1h-1v-2h1zM1149 755h2v1h1v2h-1v1h-2v-1h-1v-2h1zM1155 323h2v1h1v2h-1v1h-2v-1h-1v-2h1zM1161 747h2v1h1v2h-1v1h-2v-1h-1v-2h1zM1167 746h2v1h1v2h-1v1h-2v-1h-1v-2h1zM1172 735h2v1h1v2h-1v1h-2v-1h-1v-2h1zM1178 332h2v1h1v2h-1v1h-2v-1h-1v-2h1zM1184 748h2v1h1v2h-1v1h-2v-1h-1v-2h1zM1189 751h2v1h1v2h-1v1h-2v-1h-1v-2h1zM1195 747h2v1h1v2h-1v1h-2v-1h-1v-2h1zM1201 331h2v1h1v2h-1v1h-2v-1h-1v-2h1zM1207 759h2v1h1v2h-1v1h-2v-1h-1v-2h1zM1212 731h2v1h1v2h-1v1h-2v-1h-1v-2h1zM1218 748h2v1h1v2h-1v1h-2v-1h-1v-2h1zM1224 371h2v1h1v2h-1v1h-2v-1h-1v-2h1zM1230 749h2v1h1v2h-1v1h-2v-1h-1v-2h1zM1235 745h2v1h1v2h-1v1h-2v-1h-1v-2h1z" fill="#00ffff"/></svg>
<div style="position:absolute;left:1610px;top:154px;width:3px;height:877px;background:linear-gradient(90deg,#fafafa 0 1px,#e8e8e8 1px 2px,#fafafa 2px 3px)"></div>
<div id="t57" style="position:absolute;left:1624.5px;top:161.47px;font:bold 14.8px/14.8px 'Liberation Sans', sans-serif;color:#ffc107;white-space:pre;transform:translateX(-0.948px) scaleX(0.9040);transform-origin:0 0;">Display</div>
<div id="t58" style="position:absolute;left:1624.5px;top:185.73px;font:normal 14.5px/14.5px 'Liberation Sans', sans-serif;color:#eeeeee;white-space:pre;transform:translateX(-0.958px) scaleX(0.9244);transform-origin:0 0;">Channel</div>
<div style="position:absolute;left:1764px;top:182px;width:130px;height:21px;border:1px solid #eeeeee;background:#212121"></div>
<div style="position:absolute;left:1878px;top:184px;width:14px;height:17px;border-top:1px solid #f4f4f4;border-left:1px solid #f4f4f4;border-right:1px solid #a0a0a0;border-bottom:1px solid #a0a0a0;background:#212121"></div>
<svg style="position:absolute;left:1878px;top:182px" width="14" height="21"><path d="M3 8.5 L10 8.5 L6.5 12.0 Z" fill="#f4f4f4"/></svg>
<div id="t59" style="position:absolute;left:1768px;top:184.73px;font:normal 14.5px/14.5px 'Liberation Sans', sans-serif;color:#eeeeee;white-space:pre;transform:translateX(-0.045px) scaleX(0.8915);transform-origin:0 0;">signal</div>
<div id="t60" style="position:absolute;left:1624.5px;top:210.97px;font:bold 14.8px/14.8px 'Liberation Sans', sans-serif;color:#ffc107;white-space:pre;transform:translateX(-0.988px) scaleX(0.9841);transform-origin:0 0;">Settings</div>
<div id="t61" style="position:absolute;left:1624.5px;top:235.73px;font:normal 14.5px/14.5px 'Liberation Sans', sans-serif;color:#eeeeee;white-space:pre;transform:translateX(-0.966px) scaleX(0.9454);transform-origin:0 0;">Shots</div>
<div style="position:absolute;left:1764px;top:232px;width:133px;height:21px;border:1px solid #eeeeee;background:#212121"></div>
<div id="t62" style="position:absolute;left:1767px;top:236.03px;font:normal 14.5px/14.5px 'Liberation Sans', sans-serif;color:#eeeeee;white-space:pre;transform:translateX(-0.081px) scaleX(1.0083);transform-origin:0 0;">200</div>
<div id="t63" style="position:absolute;left:1624.5px;top:260.73px;font:normal 14.5px/14.5px 'Liberation Sans', sans-serif;color:#eeeeee;white-space:pre;transform:translateX(-0.949px) scaleX(0.9318);transform-origin:0 0;">Save Shots</div>
<div id="t64" style="position:absolute;left:1624.5px;top:285.73px;font:normal 14.5px/14.5px 'Liberation Sans', sans-serif;color:#eeeeee;white-space:pre;transform:translateX(-0.952px) scaleX(0.9330);transform-origin:0 0;">Shot Processing</div>
<div style="position:absolute;left:1765px;top:282px;width:40px;height:20px;background:#009688"></div>
<div id="t65" style="position:absolute;left:1765.0px;width:40px;text-align:center;top:284.73px;font:bold 14.5px/14.5px 'Liberation Sans', sans-serif;color:#111111;white-space:pre;transform:translateX(-0.203px) scaleX(0.9971);transform-origin:0 0;">Load</div>
<div style="position:absolute;left:1811px;top:282px;width:85px;height:21px;border:1px solid #eeeeee;background:#212121"></div>
<div style="position:absolute;left:1812px;top:0;width:83px;height:1048px;overflow:hidden"><div style="position:absolute;left:-120.0px;width:200px;text-align:right;top:285.73px;font:normal 14.5px/14.5px 'Liberation Sans', sans-serif;color:#eeeeee;white-space:pre;">opping_BJT.py</div></div>
<div id="t66" style="position:absolute;left:1624.5px;top:311.73px;font:normal 14.5px/14.5px 'Liberation Sans', sans-serif;color:#eeeeee;white-space:pre;transform:translateX(-1.028px) scaleX(0.9163);transform-origin:0 0;">Processing Time</div>
<div id="t67" style="position:absolute;left:1767px;top:311.02px;font:bold 15.5px/15.5px 'Liberation Serif', serif;color:#ffffff;white-space:pre;transform:translateX(-0.571px) scaleX(1.1641);transform-origin:0 0;">0.003</div>
<div style="position:absolute;left:8px;top:1040px;width:1920px;height:1px;background:#1a1a1a"></div>
<div style="position:absolute;left:8px;top:1041px;width:1920px;height:7px;background:linear-gradient(90deg,#a9bfd8 0px,#a9c0da 1700px,#8494a9 1745px,#8494a9 1912px,#98a8bc 1913px)"></div>
<div style="position:absolute;left:614px;top:1041px;width:1314px;height:1px;background:#d8e4f0;opacity:.6"></div>
<div style="position:absolute;left:614px;top:1041px;width:2px;height:7px;background:#6a7a90"></div>
<div style="position:absolute;left:618px;top:1041px;width:1px;height:7px;background:#6a7a90"></div>
<div style="position:absolute;left:8px;top:1041px;width:59px;height:7px;background:#8494ab"></div>
<div style="position:absolute;left:20px;top:1042px;width:30px;height:18px;border:1px solid #3a6a9a;border-radius:50%;background:#b8c8d8"></div>
<div style="position:absolute;left:68px;top:1041px;width:58px;height:7px;background:linear-gradient(90deg,#e4ecf5,#c8d6e6);border:1px solid #8f9fb5;border-bottom:none;border-radius:2px 2px 0 0"></div>
<div style="position:absolute;left:130px;top:1041px;width:58px;height:7px;background:linear-gradient(90deg,#e4ecf5,#c8d6e6);border:1px solid #8f9fb5;border-bottom:none;border-radius:2px 2px 0 0"></div>
<div style="position:absolute;left:254px;top:1041px;width:58px;height:7px;background:linear-gradient(90deg,#e4ecf5,#c8d6e6);border:1px solid #8f9fb5;border-bottom:none;border-radius:2px 2px 0 0"></div>
<div style="position:absolute;left:316px;top:1041px;width:58px;height:7px;background:linear-gradient(90deg,#e4ecf5,#c8d6e6);border:1px solid #8f9fb5;border-bottom:none;border-radius:2px 2px 0 0"></div>
<div style="position:absolute;left:378px;top:1041px;width:58px;height:7px;background:linear-gradient(90deg,#e4ecf5,#c8d6e6);border:1px solid #8f9fb5;border-bottom:none;border-radius:2px 2px 0 0"></div>
<div style="position:absolute;left:440px;top:1041px;width:58px;height:7px;background:linear-gradient(90deg,#e4ecf5,#c8d6e6);border:1px solid #8f9fb5;border-bottom:none;border-radius:2px 2px 0 0"></div>
<div style="position:absolute;left:502px;top:1041px;width:58px;height:7px;background:linear-gradient(90deg,#e4ecf5,#c8d6e6);border:1px solid #8f9fb5;border-bottom:none;border-radius:2px 2px 0 0"></div>
<div style="position:absolute;left:564px;top:1041px;width:58px;height:7px;background:linear-gradient(90deg,#e4ecf5,#c8d6e6);border:1px solid #8f9fb5;border-bottom:none;border-radius:2px 2px 0 0"></div>
<div style="position:absolute;left:188px;top:1041px;width:65px;height:7px;background:#a8bcd4"></div>
<div style="position:absolute;left:83px;top:1046px;width:14px;height:2px;background:#d4b060"></div>
<div style="position:absolute;left:151px;top:1045px;width:16px;height:7px;background:#e04030;border-radius:50%"></div>
<svg style="position:absolute;left:205px;top:1044px" width="20" height="4"><path d="M0 4 L19 0 L19 4Z" fill="#8a3a90"/></svg>
</div></body></html>
